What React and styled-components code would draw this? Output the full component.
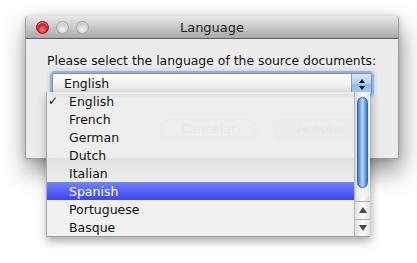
import styled, { createGlobalStyle } from "styled-components";

const GlobalStyle = createGlobalStyle`
  html, body {
    margin: 0;
    padding: 0;
    background: #ffffff;
  }
  body {
    font-family: "DejaVu Sans", "Liberation Sans", sans-serif;
  }
`;

const languages = [
  "English",
  "French",
  "German",
  "Dutch",
  "Italian",
  "Spanish",
  "Portuguese",
  "Basque",
];

function App() {
  const selected = "English";
  const hovered = "Spanish";

  return (
    <Page>
      <GlobalStyle />
      <Window>
        <TitleBar>
          <Lights>
            <Light $color="red" />
            <Light />
            <Light />
          </Lights>
          <Title>Language</Title>
        </TitleBar>
        <Body>
          <Label>Please select the language of the source documents:</Label>
          <Combo>
            <ComboText>{selected}</ComboText>
            <ComboArrow>
              <Tri $up />
              <Tri />
            </ComboArrow>
          </Combo>
          <Buttons>
            <Button>Cancelar</Button>
            <Button $primary>Aceptar</Button>
          </Buttons>
        </Body>
      </Window>

      <Popup>
        <List>
          {languages.map((lang) => (
            <Row key={lang} $active={lang === hovered}>
              <Check>{lang === selected ? "✓" : ""}</Check>
              {lang}
            </Row>
          ))}
        </List>
        <Scrollbar>
          <Track>
            <Thumb />
            <TrackEnd />
          </Track>
          <ArrowBox>
            <SmallTri $up />
          </ArrowBox>
          <ArrowBox>
            <SmallTri />
          </ArrowBox>
        </Scrollbar>
      </Popup>
    </Page>
  );
}

export default App;

const Page = styled.div`
  position: relative;
  width: 417px;
  height: 263px;
  padding: 16px 0 0 25px;
  box-sizing: border-box;
  overflow: hidden;
`;

const Window = styled.div`
  width: 374px;
  height: 143px;
  display: flex;
  flex-direction: column;
  border-radius: 4px 4px 0 0;
  background: #ececec;
  border: 1px solid #9c9c9c;
  border-top: none;
  box-sizing: border-box;
  box-shadow: 2px 12px 24px rgba(0, 0, 0, 0.45), 0 0 6px rgba(0, 0, 0, 0.15);
`;

const TitleBar = styled.div`
  position: relative;
  height: 22px;
  display: flex;
  align-items: center;
  justify-content: center;
  border-radius: 4px 4px 0 0;
  background: linear-gradient(#e9e9e9, #c9c9c9 50%, #a9a9a9);
  border-bottom: 1px solid #5e5e5e;
  flex-shrink: 0;
`;

const Lights = styled.div`
  position: absolute;
  left: 10px;
  top: 5px;
  display: flex;
  gap: 7px;
`;

const Light = styled.span`
  width: 13px;
  height: 13px;
  border-radius: 50%;
  box-sizing: border-box;
  border: 1px solid ${(p) => (p.$color === "red" ? "#8d1010" : "#a2a2a2")};
  background: ${(p) =>
    p.$color === "red"
      ? "radial-gradient(circle at 50% 70%, #ff8a8a 0%, #e8212b 45%, #a80a10 100%)"
      : "radial-gradient(circle at 50% 70%, #f4f4f4 0%, #d2d2d2 55%, #b8b8b8 100%)"};
  box-shadow: inset 0 1px 1px rgba(255, 255, 255, 0.6);
`;

const Title = styled.div`
  font-size: 13px;
  color: #1a1a1a;
`;

const Body = styled.div`
  flex: 1;
  display: flex;
  flex-direction: column;
  padding: 14px 26px 0 21px;
`;

const Label = styled.div`
  font-size: 12.4px;
  line-height: 15px;
  color: #111;
  white-space: nowrap;
`;

const Combo = styled.div`
  margin: 5px 0 0 5px;
  height: 20px;
  display: flex;
  border: 1px solid #8f8f8f;
  border-radius: 3px;
  background: linear-gradient(#ffffff, #f1f1f1 50%, #e4e4e4);
  box-shadow: 0 0 0 2px rgba(120, 165, 230, 0.75), 0 0 4px 3px rgba(120, 170, 240, 0.4);
`;

const ComboText = styled.div`
  flex: 1;
  font-size: 12.5px;
  line-height: 20px;
  padding-left: 11px;
  color: #111;
`;

const ComboArrow = styled.div`
  width: 19px;
  display: flex;
  flex-direction: column;
  align-items: center;
  justify-content: center;
  gap: 3px;
  border-left: 1px solid #7f9fd0;
  border-radius: 0 2px 2px 0;
  background: linear-gradient(#d6e8fd, #a9cdf6 50%, #86b8f0 55%, #b9dcff);
`;

const Tri = styled.span`
  width: 0;
  height: 0;
  border-left: 3.5px solid transparent;
  border-right: 3.5px solid transparent;
  ${(p) => (p.$up ? "border-bottom: 4px solid #111;" : "border-top: 4px solid #111;")}
`;

const Buttons = styled.div`
  margin-top: 24px;
  display: flex;
  justify-content: flex-end;
  gap: 16px;
  padding-right: 2px;
`;

const Button = styled.div`
  width: 97px;
  height: 20px;
  box-sizing: border-box;
  border-radius: 10px;
  border: 1px solid rgba(0, 0, 0, 0.12);
  background: ${(p) => (p.$primary ? "#dfe5ee" : "#ececec")};
  color: #b4b4b4;
  font-size: 12.5px;
  line-height: 18px;
  text-align: center;
`;

const Popup = styled.div`
  position: absolute;
  left: 46px;
  top: 92px;
  width: 323px;
  height: 144px;
  display: flex;
  background: rgba(238, 238, 238, 0.86);
  border-left: 1px solid #a8a8a8;
  border-bottom: 1px solid #a0a0a0;
  box-shadow: 1px 4px 9px rgba(0, 0, 0, 0.35);
`;

const List = styled.div`
  flex: 1;
  display: flex;
  flex-direction: column;
`;

const Row = styled.div`
  height: 18px;
  display: flex;
  align-items: center;
  font-size: 12.5px;
  color: ${(p) => (p.$active ? "#fff" : "#111")};
  background: ${(p) =>
    p.$active ? "linear-gradient(#7484fb, #5563f7 50%, #3a45f2)" : "transparent"};
`;

const Check = styled.span`
  width: 21px;
  padding-left: 1px;
  font-size: 12px;
`;

const Scrollbar = styled.div`
  width: 15px;
  display: flex;
  flex-direction: column;
  border-left: 1px solid #b4b4b4;
  background: linear-gradient(90deg, #dcdcdc, #f7f7f7 50%, #e6e6e6);
`;

const Track = styled.div`
  flex: 1;
  display: flex;
  flex-direction: column;
  align-items: center;
  padding-top: 5px;
`;

const Thumb = styled.div`
  width: 11px;
  height: 91px;
  border-radius: 6px;
  box-sizing: border-box;
  border: 1px solid #2f63b8;
  background: linear-gradient(90deg, #3d7ad6, #8ebff4 35%, #b7dafc 50%, #7fb2ee 70%, #3c76d2);
`;

const TrackEnd = styled.div`
  margin-top: 1px;
  width: 13px;
  height: 12px;
  border-radius: 0 0 7px 7px;
  background: linear-gradient(90deg, #e4e4e4, #fbfbfb 50%, #e9e9e9);
  box-shadow: 0 1px 1px rgba(0, 0, 0, 0.1);
`;

const ArrowBox = styled.div`
  height: 17px;
  display: flex;
  align-items: center;
  justify-content: center;
  border-top: 1px solid #b0b0b0;
  background: linear-gradient(90deg, #e2e2e2, #fafafa 50%, #e4e4e4);
`;

const SmallTri = styled.span`
  width: 0;
  height: 0;
  border-left: 4px solid transparent;
  border-right: 4px solid transparent;
  ${(p) => (p.$up ? "border-bottom: 6px solid #4a4a4a;" : "border-top: 6px solid #4a4a4a;")}
`;
